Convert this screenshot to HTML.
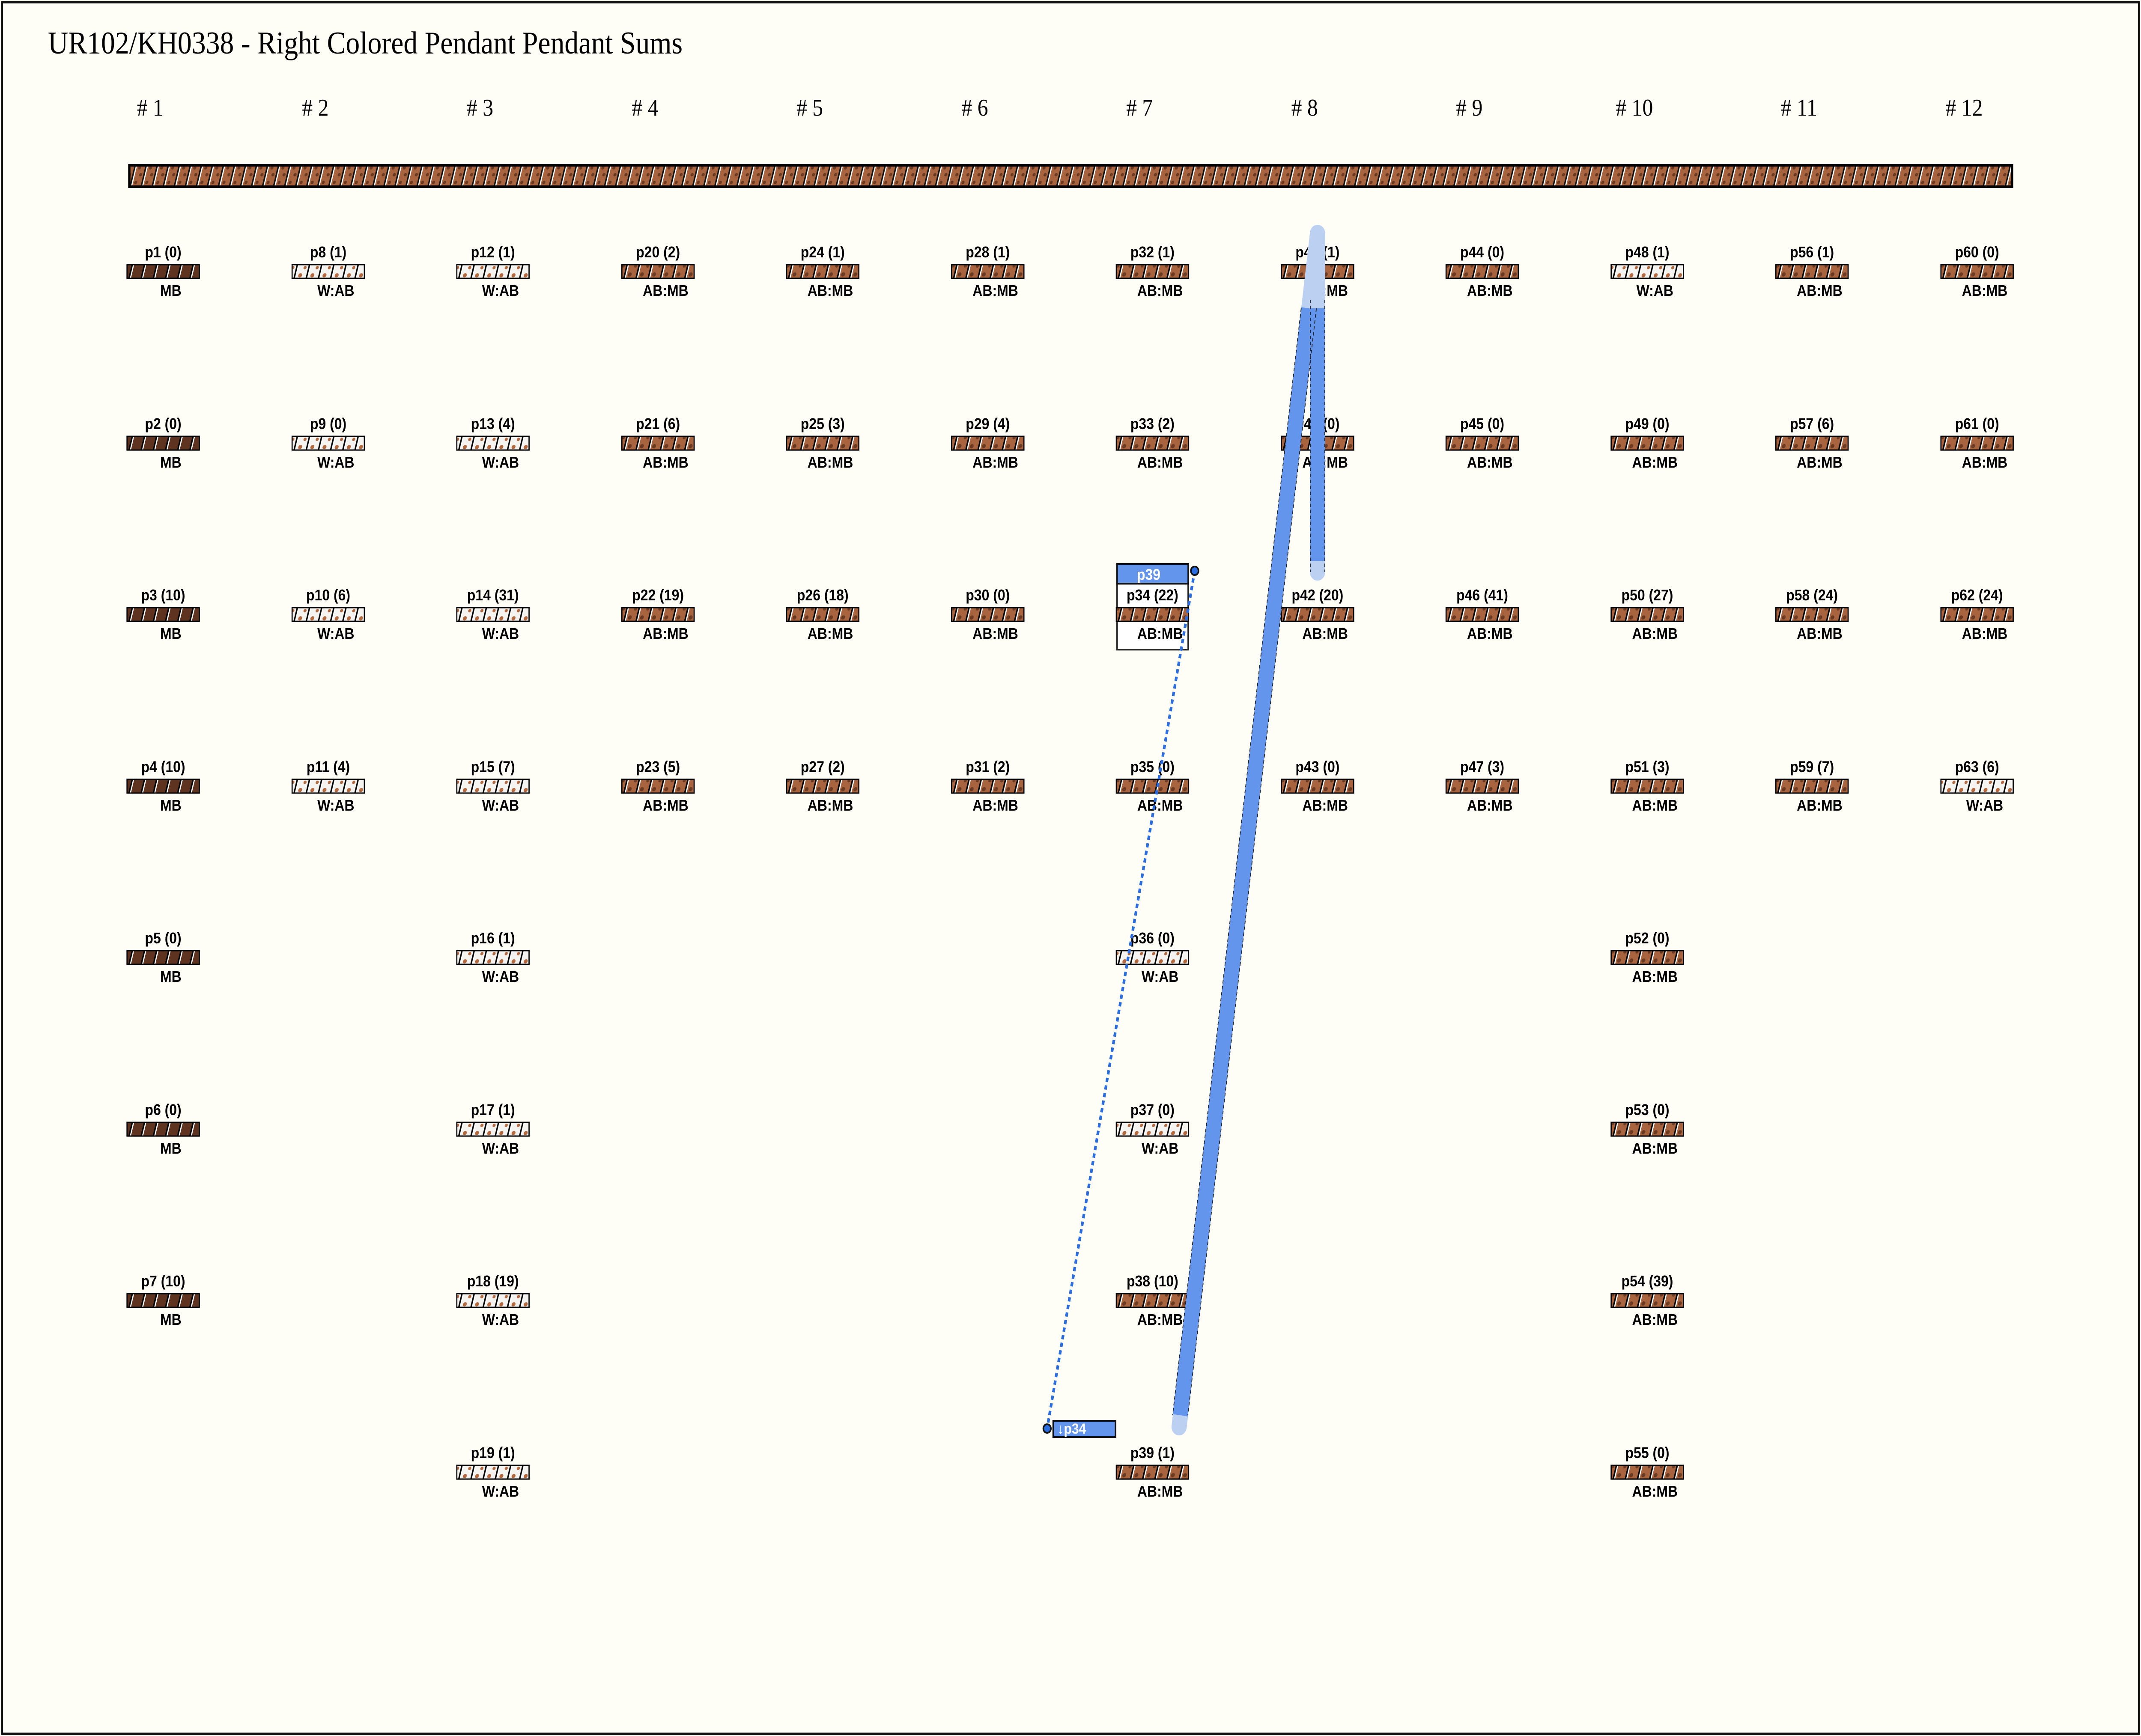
<!DOCTYPE html>
<html><head><meta charset="utf-8"><style>
html,body{margin:0;padding:0;background:#fffef6;overflow:hidden}
svg{display:block}
.l{font-family:"Liberation Sans",sans-serif;font-size:36px;font-weight:bold;text-anchor:middle}
</style></head><body>
<svg width="100%" height="4054" viewBox="0 0 5629 4054" preserveAspectRatio="none" xmlns="http://www.w3.org/2000/svg">
<defs>
<pattern id="mb" width="32" height="64" patternUnits="userSpaceOnUse" patternTransform="skewX(-15)">
<rect width="32" height="64" fill="#5e3420"/><rect x="25" width="4" height="64" fill="#000"/><rect x="29" width="3" height="64" fill="#fff"/>
</pattern>
<pattern id="ab" width="32" height="64" patternUnits="userSpaceOnUse" patternTransform="skewX(-15)">
<rect width="32" height="64" fill="#a8643e"/>
<circle cx="8" cy="8" r="5" fill="#6b3a22"/><circle cx="17" cy="22" r="4" fill="#6b3a22"/><circle cx="6" cy="40" r="5" fill="#6b3a22"/><circle cx="18" cy="52" r="4" fill="#6b3a22"/>
<rect x="25" width="4" height="64" fill="#000"/><rect x="29" width="3" height="64" fill="#fff"/>
</pattern>
<pattern id="wa" width="32" height="64" patternUnits="userSpaceOnUse" patternTransform="skewX(-15)">
<rect width="32" height="64" fill="#f4f3f0"/>
<circle cx="9" cy="10" r="5" fill="#b4683e"/><circle cx="18" cy="24" r="5" fill="#b4683e"/><circle cx="7" cy="42" r="5" fill="#b4683e"/><circle cx="17" cy="56" r="4" fill="#b4683e"/>
<rect x="25" width="4" height="64" fill="#000"/><rect x="29" width="3" height="64" fill="#fff"/>
</pattern>
<pattern id="cd" width="29" height="64" patternUnits="userSpaceOnUse" patternTransform="skewX(-15)">
<rect width="29" height="64" fill="#a8643e"/>
<circle cx="8" cy="8" r="4" fill="#6b3a22"/><circle cx="15" cy="24" r="4" fill="#6b3a22"/><circle cx="7" cy="42" r="4" fill="#6b3a22"/><circle cx="16" cy="55" r="3" fill="#6b3a22"/>
<rect x="22" width="4" height="64" fill="#111"/><rect x="26" width="3" height="64" fill="#fff"/>
</pattern>
<g id="dummy"></g>
</defs>
<rect x="0" y="0" width="5629" height="4054" fill="#fffef6"/>
<rect x="5.5" y="5.5" width="5618" height="4043" fill="none" stroke="#111" stroke-width="5"/>
<text x="126" y="125" font-family="Liberation Serif, serif" font-size="74" fill="#000">UR102/KH0338 - Right Colored Pendant Pendant Sums</text>
<g font-family="Liberation Serif, serif" font-size="56" text-anchor="middle" fill="#000">
<text x="395" y="270"># 1</text><text x="829" y="270"># 2</text><text x="1262" y="270"># 3</text><text x="1696" y="270"># 4</text>
<text x="2129" y="270"># 5</text><text x="2563" y="270"># 6</text><text x="2996" y="270"># 7</text><text x="3430" y="270"># 8</text>
<text x="3863" y="270"># 9</text><text x="4297" y="270"># 10</text><text x="4730" y="270"># 11</text><text x="5164" y="270"># 12</text>
</g>
<rect x="340" y="386" width="4950" height="50" fill="url(#cd)" stroke="#000" stroke-width="6"/>

<g class="l">
<!-- col1 -->
<g transform="translate(334,569)"><text x="95" y="32">p1 (0)</text><rect y="49" width="190" height="32" fill="url(#mb)" stroke="#000" stroke-width="3"/><text x="115" y="122">MB</text></g>
<g transform="translate(334,970)"><text x="95" y="32">p2 (0)</text><rect y="49" width="190" height="32" fill="url(#mb)" stroke="#000" stroke-width="3"/><text x="115" y="122">MB</text></g>
<g transform="translate(334,1370)"><text x="95" y="32">p3 (10)</text><rect y="49" width="190" height="32" fill="url(#mb)" stroke="#000" stroke-width="3"/><text x="115" y="122">MB</text></g>
<g transform="translate(334,1771)"><text x="95" y="32">p4 (10)</text><rect y="49" width="190" height="32" fill="url(#mb)" stroke="#000" stroke-width="3"/><text x="115" y="122">MB</text></g>
<g transform="translate(334,2171)"><text x="95" y="32">p5 (0)</text><rect y="49" width="190" height="32" fill="url(#mb)" stroke="#000" stroke-width="3"/><text x="115" y="122">MB</text></g>
<g transform="translate(334,2572)"><text x="95" y="32">p6 (0)</text><rect y="49" width="190" height="32" fill="url(#mb)" stroke="#000" stroke-width="3"/><text x="115" y="122">MB</text></g>
<g transform="translate(334,2972)"><text x="95" y="32">p7 (10)</text><rect y="49" width="190" height="32" fill="url(#mb)" stroke="#000" stroke-width="3"/><text x="115" y="122">MB</text></g>
<!-- col2 -->
<g transform="translate(768,569)"><text x="95" y="32">p8 (1)</text><rect y="49" width="190" height="32" fill="url(#wa)" stroke="#000" stroke-width="3"/><text x="115" y="122">W:AB</text></g>
<g transform="translate(768,970)"><text x="95" y="32">p9 (0)</text><rect y="49" width="190" height="32" fill="url(#wa)" stroke="#000" stroke-width="3"/><text x="115" y="122">W:AB</text></g>
<g transform="translate(768,1370)"><text x="95" y="32">p10 (6)</text><rect y="49" width="190" height="32" fill="url(#wa)" stroke="#000" stroke-width="3"/><text x="115" y="122">W:AB</text></g>
<g transform="translate(768,1771)"><text x="95" y="32">p11 (4)</text><rect y="49" width="190" height="32" fill="url(#wa)" stroke="#000" stroke-width="3"/><text x="115" y="122">W:AB</text></g>
<!-- col3 -->
<g transform="translate(1201,569)"><text x="95" y="32">p12 (1)</text><rect y="49" width="190" height="32" fill="url(#wa)" stroke="#000" stroke-width="3"/><text x="115" y="122">W:AB</text></g>
<g transform="translate(1201,970)"><text x="95" y="32">p13 (4)</text><rect y="49" width="190" height="32" fill="url(#wa)" stroke="#000" stroke-width="3"/><text x="115" y="122">W:AB</text></g>
<g transform="translate(1201,1370)"><text x="95" y="32">p14 (31)</text><rect y="49" width="190" height="32" fill="url(#wa)" stroke="#000" stroke-width="3"/><text x="115" y="122">W:AB</text></g>
<g transform="translate(1201,1771)"><text x="95" y="32">p15 (7)</text><rect y="49" width="190" height="32" fill="url(#wa)" stroke="#000" stroke-width="3"/><text x="115" y="122">W:AB</text></g>
<g transform="translate(1201,2171)"><text x="95" y="32">p16 (1)</text><rect y="49" width="190" height="32" fill="url(#wa)" stroke="#000" stroke-width="3"/><text x="115" y="122">W:AB</text></g>
<g transform="translate(1201,2572)"><text x="95" y="32">p17 (1)</text><rect y="49" width="190" height="32" fill="url(#wa)" stroke="#000" stroke-width="3"/><text x="115" y="122">W:AB</text></g>
<g transform="translate(1201,2972)"><text x="95" y="32">p18 (19)</text><rect y="49" width="190" height="32" fill="url(#wa)" stroke="#000" stroke-width="3"/><text x="115" y="122">W:AB</text></g>
<g transform="translate(1201,3373)"><text x="95" y="32">p19 (1)</text><rect y="49" width="190" height="32" fill="url(#wa)" stroke="#000" stroke-width="3"/><text x="115" y="122">W:AB</text></g>
<!-- col4 -->
<g transform="translate(1635,569)"><text x="95" y="32">p20 (2)</text><rect y="49" width="190" height="32" fill="url(#ab)" stroke="#000" stroke-width="3"/><text x="115" y="122">AB:MB</text></g>
<g transform="translate(1635,970)"><text x="95" y="32">p21 (6)</text><rect y="49" width="190" height="32" fill="url(#ab)" stroke="#000" stroke-width="3"/><text x="115" y="122">AB:MB</text></g>
<g transform="translate(1635,1370)"><text x="95" y="32">p22 (19)</text><rect y="49" width="190" height="32" fill="url(#ab)" stroke="#000" stroke-width="3"/><text x="115" y="122">AB:MB</text></g>
<g transform="translate(1635,1771)"><text x="95" y="32">p23 (5)</text><rect y="49" width="190" height="32" fill="url(#ab)" stroke="#000" stroke-width="3"/><text x="115" y="122">AB:MB</text></g>
<!-- col5 -->
<g transform="translate(2068,569)"><text x="95" y="32">p24 (1)</text><rect y="49" width="190" height="32" fill="url(#ab)" stroke="#000" stroke-width="3"/><text x="115" y="122">AB:MB</text></g>
<g transform="translate(2068,970)"><text x="95" y="32">p25 (3)</text><rect y="49" width="190" height="32" fill="url(#ab)" stroke="#000" stroke-width="3"/><text x="115" y="122">AB:MB</text></g>
<g transform="translate(2068,1370)"><text x="95" y="32">p26 (18)</text><rect y="49" width="190" height="32" fill="url(#ab)" stroke="#000" stroke-width="3"/><text x="115" y="122">AB:MB</text></g>
<g transform="translate(2068,1771)"><text x="95" y="32">p27 (2)</text><rect y="49" width="190" height="32" fill="url(#ab)" stroke="#000" stroke-width="3"/><text x="115" y="122">AB:MB</text></g>
<!-- col6 -->
<g transform="translate(2502,569)"><text x="95" y="32">p28 (1)</text><rect y="49" width="190" height="32" fill="url(#ab)" stroke="#000" stroke-width="3"/><text x="115" y="122">AB:MB</text></g>
<g transform="translate(2502,970)"><text x="95" y="32">p29 (4)</text><rect y="49" width="190" height="32" fill="url(#ab)" stroke="#000" stroke-width="3"/><text x="115" y="122">AB:MB</text></g>
<g transform="translate(2502,1370)"><text x="95" y="32">p30 (0)</text><rect y="49" width="190" height="32" fill="url(#ab)" stroke="#000" stroke-width="3"/><text x="115" y="122">AB:MB</text></g>
<g transform="translate(2502,1771)"><text x="95" y="32">p31 (2)</text><rect y="49" width="190" height="32" fill="url(#ab)" stroke="#000" stroke-width="3"/><text x="115" y="122">AB:MB</text></g>
<!-- col7 -->
<g transform="translate(2935,569)"><text x="95" y="32">p32 (1)</text><rect y="49" width="190" height="32" fill="url(#ab)" stroke="#000" stroke-width="3"/><text x="115" y="122">AB:MB</text></g>
<g transform="translate(2935,970)"><text x="95" y="32">p33 (2)</text><rect y="49" width="190" height="32" fill="url(#ab)" stroke="#000" stroke-width="3"/><text x="115" y="122">AB:MB</text></g>
<rect x="2937" y="1317" width="187" height="200" fill="#fff" stroke="#222" stroke-width="4"/>
<rect x="2937" y="1317" width="187" height="46" fill="#6495ed" stroke="#111" stroke-width="4"/>
<text x="3020" y="1354" fill="#fff">p39</text>
<g transform="translate(2935,1370)"><text x="95" y="32">p34 (22)</text><rect y="49" width="190" height="32" fill="url(#ab)" stroke="#000" stroke-width="3"/><text x="115" y="122">AB:MB</text></g>
<g transform="translate(2935,1771)"><text x="95" y="32">p35 (0)</text><rect y="49" width="190" height="32" fill="url(#ab)" stroke="#000" stroke-width="3"/><text x="115" y="122">AB:MB</text></g>
<g transform="translate(2935,2171)"><text x="95" y="32">p36 (0)</text><rect y="49" width="190" height="32" fill="url(#wa)" stroke="#000" stroke-width="3"/><text x="115" y="122">W:AB</text></g>
<g transform="translate(2935,2572)"><text x="95" y="32">p37 (0)</text><rect y="49" width="190" height="32" fill="url(#wa)" stroke="#000" stroke-width="3"/><text x="115" y="122">W:AB</text></g>
<g transform="translate(2935,2972)"><text x="95" y="32">p38 (10)</text><rect y="49" width="190" height="32" fill="url(#ab)" stroke="#000" stroke-width="3"/><text x="115" y="122">AB:MB</text></g>
<g transform="translate(2935,3373)"><text x="95" y="32">p39 (1)</text><rect y="49" width="190" height="32" fill="url(#ab)" stroke="#000" stroke-width="3"/><text x="115" y="122">AB:MB</text></g>
<!-- col8 -->
<g transform="translate(3369,569)"><text x="95" y="32">p40 (1)</text><rect y="49" width="190" height="32" fill="url(#ab)" stroke="#000" stroke-width="3"/><text x="115" y="122">AB:MB</text></g>
<g transform="translate(3369,970)"><text x="95" y="32">p41 (0)</text><rect y="49" width="190" height="32" fill="url(#ab)" stroke="#000" stroke-width="3"/><text x="115" y="122">AB:MB</text></g>
<g transform="translate(3369,1370)"><text x="95" y="32">p42 (20)</text><rect y="49" width="190" height="32" fill="url(#ab)" stroke="#000" stroke-width="3"/><text x="115" y="122">AB:MB</text></g>
<g transform="translate(3369,1771)"><text x="95" y="32">p43 (0)</text><rect y="49" width="190" height="32" fill="url(#ab)" stroke="#000" stroke-width="3"/><text x="115" y="122">AB:MB</text></g>
<!-- col9 -->
<g transform="translate(3802,569)"><text x="95" y="32">p44 (0)</text><rect y="49" width="190" height="32" fill="url(#ab)" stroke="#000" stroke-width="3"/><text x="115" y="122">AB:MB</text></g>
<g transform="translate(3802,970)"><text x="95" y="32">p45 (0)</text><rect y="49" width="190" height="32" fill="url(#ab)" stroke="#000" stroke-width="3"/><text x="115" y="122">AB:MB</text></g>
<g transform="translate(3802,1370)"><text x="95" y="32">p46 (41)</text><rect y="49" width="190" height="32" fill="url(#ab)" stroke="#000" stroke-width="3"/><text x="115" y="122">AB:MB</text></g>
<g transform="translate(3802,1771)"><text x="95" y="32">p47 (3)</text><rect y="49" width="190" height="32" fill="url(#ab)" stroke="#000" stroke-width="3"/><text x="115" y="122">AB:MB</text></g>
<!-- col10 -->
<g transform="translate(4236,569)"><text x="95" y="32">p48 (1)</text><rect y="49" width="190" height="32" fill="url(#wa)" stroke="#000" stroke-width="3"/><text x="115" y="122">W:AB</text></g>
<g transform="translate(4236,970)"><text x="95" y="32">p49 (0)</text><rect y="49" width="190" height="32" fill="url(#ab)" stroke="#000" stroke-width="3"/><text x="115" y="122">AB:MB</text></g>
<g transform="translate(4236,1370)"><text x="95" y="32">p50 (27)</text><rect y="49" width="190" height="32" fill="url(#ab)" stroke="#000" stroke-width="3"/><text x="115" y="122">AB:MB</text></g>
<g transform="translate(4236,1771)"><text x="95" y="32">p51 (3)</text><rect y="49" width="190" height="32" fill="url(#ab)" stroke="#000" stroke-width="3"/><text x="115" y="122">AB:MB</text></g>
<g transform="translate(4236,2171)"><text x="95" y="32">p52 (0)</text><rect y="49" width="190" height="32" fill="url(#ab)" stroke="#000" stroke-width="3"/><text x="115" y="122">AB:MB</text></g>
<g transform="translate(4236,2572)"><text x="95" y="32">p53 (0)</text><rect y="49" width="190" height="32" fill="url(#ab)" stroke="#000" stroke-width="3"/><text x="115" y="122">AB:MB</text></g>
<g transform="translate(4236,2972)"><text x="95" y="32">p54 (39)</text><rect y="49" width="190" height="32" fill="url(#ab)" stroke="#000" stroke-width="3"/><text x="115" y="122">AB:MB</text></g>
<g transform="translate(4236,3373)"><text x="95" y="32">p55 (0)</text><rect y="49" width="190" height="32" fill="url(#ab)" stroke="#000" stroke-width="3"/><text x="115" y="122">AB:MB</text></g>
<!-- col11 -->
<g transform="translate(4669,569)"><text x="95" y="32">p56 (1)</text><rect y="49" width="190" height="32" fill="url(#ab)" stroke="#000" stroke-width="3"/><text x="115" y="122">AB:MB</text></g>
<g transform="translate(4669,970)"><text x="95" y="32">p57 (6)</text><rect y="49" width="190" height="32" fill="url(#ab)" stroke="#000" stroke-width="3"/><text x="115" y="122">AB:MB</text></g>
<g transform="translate(4669,1370)"><text x="95" y="32">p58 (24)</text><rect y="49" width="190" height="32" fill="url(#ab)" stroke="#000" stroke-width="3"/><text x="115" y="122">AB:MB</text></g>
<g transform="translate(4669,1771)"><text x="95" y="32">p59 (7)</text><rect y="49" width="190" height="32" fill="url(#ab)" stroke="#000" stroke-width="3"/><text x="115" y="122">AB:MB</text></g>
<!-- col12 -->
<g transform="translate(5103,569)"><text x="95" y="32">p60 (0)</text><rect y="49" width="190" height="32" fill="url(#ab)" stroke="#000" stroke-width="3"/><text x="115" y="122">AB:MB</text></g>
<g transform="translate(5103,970)"><text x="95" y="32">p61 (0)</text><rect y="49" width="190" height="32" fill="url(#ab)" stroke="#000" stroke-width="3"/><text x="115" y="122">AB:MB</text></g>
<g transform="translate(5103,1370)"><text x="95" y="32">p62 (24)</text><rect y="49" width="190" height="32" fill="url(#ab)" stroke="#000" stroke-width="3"/><text x="115" y="122">AB:MB</text></g>
<g transform="translate(5103,1771)"><text x="95" y="32">p63 (6)</text><rect y="49" width="190" height="32" fill="url(#wa)" stroke="#000" stroke-width="3"/><text x="115" y="122">W:AB</text></g>
</g>

<!-- overlays -->
<line x1="3464" y1="545" x2="3464" y2="1336" stroke="#bcd0f2" stroke-width="40" stroke-linecap="round"/>
<line x1="3464" y1="545" x2="3100" y2="3332" stroke="#bcd0f2" stroke-width="40" stroke-linecap="round"/>
<line x1="3464" y1="720" x2="3464" y2="1310" stroke="#6495ed" stroke-width="38"/>
<line x1="3441" y1="720" x2="3103" y2="3305" stroke="#6495ed" stroke-width="40"/>
<line x1="3445" y1="700" x2="3445" y2="1336" stroke="#222" stroke-width="2" stroke-dasharray="8 6"/>
<line x1="3483" y1="700" x2="3483" y2="1336" stroke="#222" stroke-width="2" stroke-dasharray="8 6"/>
<line x1="3421" y1="720" x2="3083" y2="3305" stroke="#222" stroke-width="2" stroke-dasharray="8 6"/>
<line x1="3461" y1="720" x2="3123" y2="3305" stroke="#222" stroke-width="2" stroke-dasharray="8 6"/>
<line x1="3141" y1="1333" x2="2753" y2="3336" stroke="#2a6de0" stroke-width="7" stroke-dasharray="10 8"/>
<circle cx="3141" cy="1333" r="10" fill="#2a6de0" stroke="#111" stroke-width="4"/>
<circle cx="2753" cy="3336" r="10" fill="#2a6de0" stroke="#111" stroke-width="4"/>
<rect x="2769" y="3318" width="164" height="38" fill="#6495ed" stroke="#111" stroke-width="4"/>
<text x="2780" y="3348" font-family="Liberation Sans, DejaVu Sans, sans-serif" font-size="34" font-weight="bold" fill="#fff">↓p34</text>
</svg>
</body></html>
